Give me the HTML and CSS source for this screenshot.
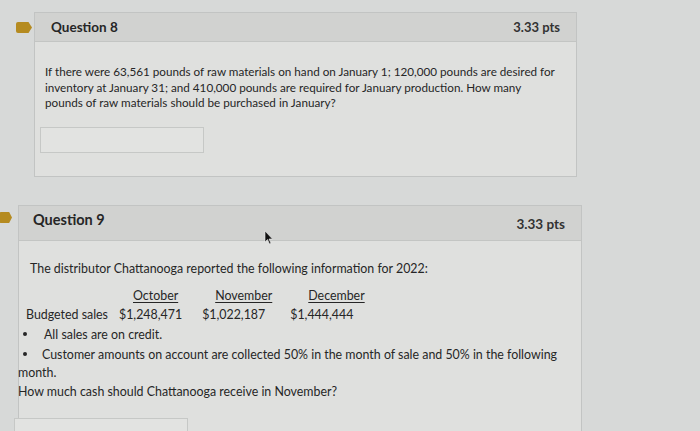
FILE: index.html
```html
<!DOCTYPE html>
<html>
<head>
<meta charset="utf-8">
<link rel="stylesheet" href="styles.css">
</head>
<body>
<div class="page">
  <section class="card q8">
    <span class="flag"></span>
    <header class="card-head">
      <h2 class="q-title">Question 8</h2>
      <span class="pts">3.33 pts</span>
    </header>
    <div class="card-body">
      <p class="q-text">If there were 63,561 pounds of raw materials on hand on January 1; 120,000 pounds are desired for inventory at January 31; and 410,000 pounds are required for January production. How many pounds of raw materials should be purchased in January?</p>
      <div class="answer"></div>
    </div>
  </section>

  <section class="card q9">
    <span class="flag"></span>
    <header class="card-head">
      <h2 class="q-title">Question 9</h2>
      <span class="pts">3.33 pts</span>
      <svg class="cursor" width="10" height="14" viewBox="0 0 10 14"><path d="M1 0 L1 11 L3.5 8.5 L5.5 13 L7 12.3 L5 8 L8.5 8 Z" fill="#111" stroke="#eee" stroke-width="0.6"/></svg>
    </header>
    <div class="card-body">
      <p class="intro">The distributor Chattanooga reported the following information for 2022:</p>
      <div class="months">
        <span class="m m1">October</span>
        <span class="m m2">November</span>
        <span class="m m3">December</span>
      </div>
      <div class="sales">
        <span class="label">Budgeted sales</span>
        <span class="v v1">$1,248,471</span>
        <span class="v v2">$1,022,187</span>
        <span class="v v3">$1,444,444</span>
      </div>
      <div class="bullet b1"><span class="dot"></span>All sales are on credit.</div>
      <div class="bullet b2"><span class="dot"></span>Customer amounts on account are collected 50% in the month of sale and 50% in the following</div>
      <p class="wrap">month.</p>
      <p class="ask">How much cash should Chattanooga receive in November?</p>
      <div class="answer a9"></div>
    </div>
  </section>
</div>
</body>
</html>
```

FILE: styles.css
```css
html, body {
  margin: 0;
  padding: 0;
}
body {
  width: 700px;
  height: 431px;
  overflow: hidden;
  background: #d7d9d8;
  font-family: Lato, "Open Sans", sans-serif;
  color: #262626;
}
.page {
  padding-top: 12px;
}
.card {
  position: relative;
  border: 1px solid #c2c4c3;
  background: #dfe0de;
}
.q8 {
  margin-left: 34px;
  width: 541px;
}
.q9 {
  margin-left: 18px;
  margin-top: 28px;
  width: 562px;
}
.flag {
  position: absolute;
  width: 12px;
  height: 11px;
  background: #b58b20;
  border-radius: 2px 0 0 2px;
  clip-path: polygon(0 0, 78% 0, 100% 50%, 78% 100%, 0 100%);
}
.q8 .flag {
  left: -19px;
  top: 9px;
  width: 16px;
}
.q9 .flag {
  left: -20px;
  top: 6px;
  width: 13px;
}
.card-head {
  position: relative;
  display: flex;
  justify-content: space-between;
  align-items: center;
  background: #d1d2d0;
  border-bottom: 1px solid #c3c5c3;
}
.q8 .card-head {
  height: 28px;
  padding: 0 16px 0 16px;
}
.q9 .card-head {
  height: 34px;
  padding: 0 16px 0 14px;
}
.q-title {
  margin: 0;
  font-weight: 700;
  font-size: 13.5px;
}
.q9 .q-title {
  font-size: 14.5px;
  margin-top: -8px;
}
.pts {
  font-weight: 700;
  font-size: 13px;
  color: #333;
}
.q9 .pts {
  font-size: 13.5px;
  margin-top: 1px;
}
.cursor {
  position: absolute;
  left: 245px;
  top: 25px;
}
.q8 .card-body {
  padding: 22px 20px 22px 10px;
  height: 90px;
}
.q-text {
  margin: 0;
  font-size: 11.7px;
  line-height: 15.5px;
  width: 514px;
}
.answer {
  margin-top: 16px;
  margin-left: -5px;
  width: 162px;
  height: 24px;
  border: 1px solid #c6c8c6;
  background: #e2e3e1;
}
.q9 .card-body {
  padding: 20px 10px 0 10px;
  font-size: 12.4px;
  height: 200px;
}
.q9 p { margin: 0; }
.q9 .card-body .intro {
  margin: 0 0 0 1px;
}
.months {
  display: flex;
  margin-top: 12px;
  height: 19px;
}
.m {
  text-decoration: underline;
  text-underline-offset: 2px;
}
.m1 { margin-left: 104px; }
.m2 { margin-left: 37px; }
.m3 { margin-left: 36px; }
.sales {
  display: flex;
  height: 18px;
  margin-left: -3px;
}
.v1 { margin-left: 11px; }
.v2 { margin-left: 20px; }
.v3 { margin-left: 25px; }
.bullet {
  display: flex;
  align-items: center;
  height: 20px;
}
.dot {
  width: 4px;
  height: 4px;
  background: #262626;
  border-radius: 50%;
  margin-left: -4px;
  margin-right: 15px;
}
.b1 { margin-left: -2px; height: 18px; }
.b1 .dot { margin-right: 17px; }
.b2 { margin-left: -2px; height: 22px; }
.b2 .dot { margin-right: 15px; }
.q9 .card-body .wrap {
  margin-left: -11px;
  line-height: 15px;
}
.q9 .card-body .ask {
  margin-left: -11px;
  margin-top: 4px;
  line-height: 16px;
}
.a9 {
  margin-top: 18px;
  margin-left: -15px;
  width: 172px;
}
```
